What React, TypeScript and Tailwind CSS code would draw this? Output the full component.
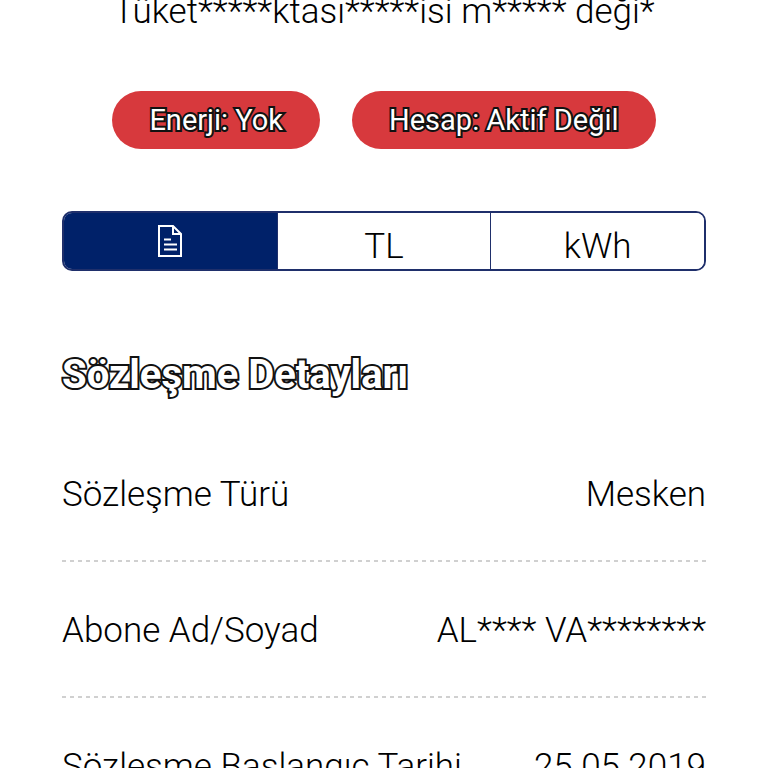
/**
 * Detalle de la instalación: estado, pestañas y datos del contrato
 */
import { useState } from 'react';

type Vista = 'belge' | 'tl' | 'kwh';

const durumlar = ['Enerji: Yok', 'Hesap: Aktif Değil'];

const detaylar = [
  { etiket: 'Sözleşme Türü', deger: 'Mesken' },
  { etiket: 'Abone Ad/Soyad', deger: 'AL**** VA********' },
  { etiket: 'Sözleşme Başlangıç Tarihi', deger: '25.05.2019' }
];

function IconoDocumento() {
  return (
    <svg width="26" height="32" viewBox="0 0 26 32" fill="none" stroke="currentColor" strokeWidth="2" aria-hidden="true">
      <path d="M2 1H16L24 9V31H2Z" />
      <path d="M16 1V9H24" />
      <path d="M7 14.5H14M7 19.5H20M7 24.5H20" />
    </svg>
  );
}

export default function App() {
  const [vista, setVista] = useState<Vista>('belge');

  const claseVista = (v: Vista) =>
    `flex flex-1 items-center justify-center ${vista === v ? 'bg-[#002169] text-white' : 'bg-white text-black'}`;

  return (
    <main className="flex flex-col bg-white px-[62px] font-['Roboto','Liberation_Sans',sans-serif] text-[35px] leading-11 font-light text-black">
      <p className="-mt-2.5 text-center">Tüket*****ktası*****isi m***** deği*</p>

      {/* Estado de la cuenta */}
      <div className="mt-[57px] flex flex-wrap justify-center gap-8">
        {durumlar.map((durum) => (
          <span
            key={durum}
            className="rounded-full bg-[#d7393d] px-[37px] py-[7px] text-[29px] font-normal text-white [paint-order:stroke_fill] [-webkit-text-stroke:4px_#111111]"
          >
            {durum}
          </span>
        ))}
      </div>

      {/* Pestañas */}
      <div className="mt-[62px] flex h-15 divide-x divide-[#1f2f6b] overflow-hidden rounded-[10px] border-2 border-[#1f2f6b]">
        <button type="button" aria-label="Sözleşme" onClick={() => setVista('belge')} className={claseVista('belge')}>
          <IconoDocumento />
        </button>
        <button type="button" onClick={() => setVista('tl')} className={claseVista('tl')}>
          <span className="pt-3">TL</span>
        </button>
        <button type="button" onClick={() => setVista('kwh')} className={claseVista('kwh')}>
          <span className="pt-3">kWh</span>
        </button>
      </div>

      <h2 className="mt-[82px] text-[40px] font-bold text-white [paint-order:stroke_fill] [-webkit-text-stroke:4px_#111111]">
        Sözleşme Detayları
      </h2>

      {/* Datos del contrato */}
      <dl className="mt-[29px]">
        {detaylar.map((d) => (
          <div
            key={d.etiket}
            className="flex justify-between bg-[repeating-linear-gradient(90deg,#d0d0d0_0_4px,transparent_4px_8px)] bg-[length:100%_2px] bg-bottom bg-no-repeat pt-[47px] pb-[45px]"
          >
            <dt>{d.etiket}</dt>
            <dd>{d.deger}</dd>
          </div>
        ))}
      </dl>
    </main>
  );
}
